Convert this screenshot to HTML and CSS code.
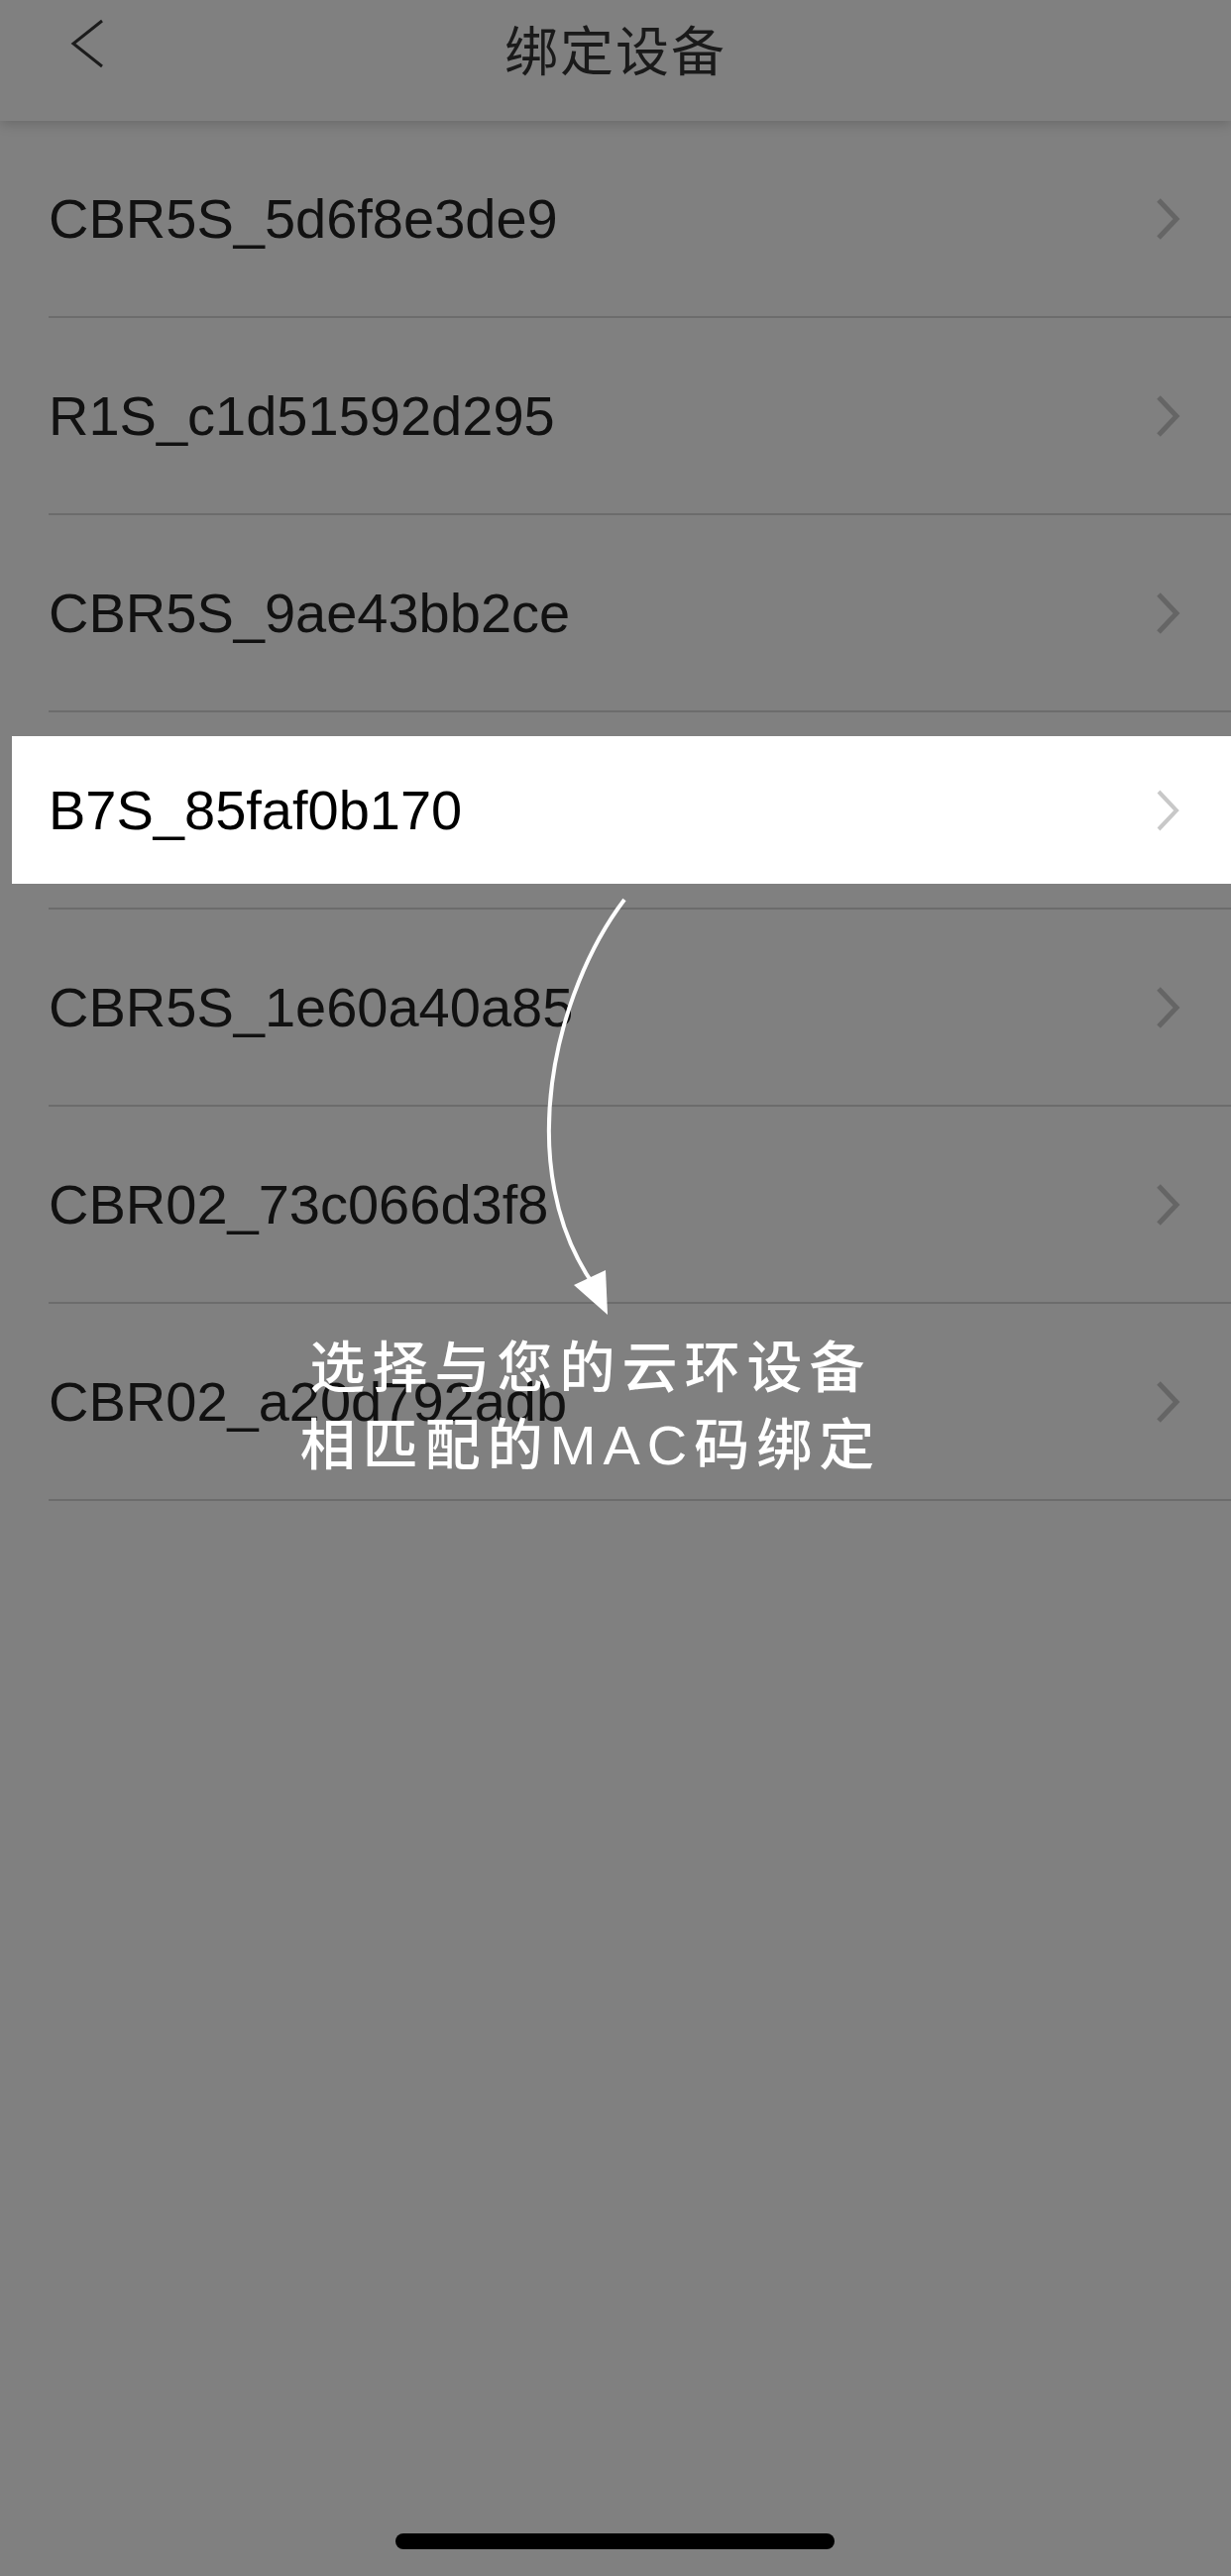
FILE: index.html
```html
<!DOCTYPE html>
<html lang="zh-CN">
<head>
<meta charset="utf-8">
<title>绑定设备</title>
<link rel="stylesheet" href="styles.css">
</head>
<body>
<div class="screen">
  <header class="navbar">
    <svg class="back" width="40" height="52" viewBox="0 0 40 52"><path d="M35 3 L6 26 L35 49" fill="none" stroke="#1c1c1c" stroke-width="3"/></svg>
    <h1 class="title">绑定设备</h1>
  </header>
  <ul class="list">
    <li class="row"><span class="name">CBR5S_5d6f8e3de9</span><svg class="chev" width="27" height="44" viewBox="0 0 27 44"><path d="M4 3 L22 22 L4 41" fill="none" stroke-width="5"/></svg></li>
    <li class="row"><span class="name">R1S_c1d51592d295</span><svg class="chev" width="27" height="44" viewBox="0 0 27 44"><path d="M4 3 L22 22 L4 41" fill="none" stroke-width="5"/></svg></li>
    <li class="row"><span class="name">CBR5S_9ae43bb2ce</span><svg class="chev" width="27" height="44" viewBox="0 0 27 44"><path d="M4 3 L22 22 L4 41" fill="none" stroke-width="5"/></svg></li>
    <li class="row row-hl"><div class="hl"><span class="name">B7S_85faf0b170</span><svg class="chev" width="27" height="44" viewBox="0 0 27 44"><path d="M4 3 L22 22 L4 41" fill="none" stroke-width="4"/></svg></div></li>
    <li class="row"><span class="name">CBR5S_1e60a40a85</span><svg class="chev" width="27" height="44" viewBox="0 0 27 44"><path d="M4 3 L22 22 L4 41" fill="none" stroke-width="5"/></svg></li>
    <li class="row"><span class="name">CBR02_73c066d3f8</span><svg class="chev" width="27" height="44" viewBox="0 0 27 44"><path d="M4 3 L22 22 L4 41" fill="none" stroke-width="5"/></svg></li>
    <li class="row"><span class="name">CBR02_a20d792adb</span><svg class="chev" width="27" height="44" viewBox="0 0 27 44"><path d="M4 3 L22 22 L4 41" fill="none" stroke-width="5"/></svg></li>
  </ul>

  <svg class="guide-arrow" width="1242" height="2600" viewBox="0 0 1242 2600">
    <path d="M630 908 C560 1000 515 1180 601 1300" fill="none" stroke="#fff" stroke-width="4"/>
    <polygon points="579,1297 611,1282 613,1327" fill="#fff"/>
  </svg>
  <div class="hint">
    <p>选择与您的云环设备</p>
    <p>相匹配的MAC码绑定</p>
  </div>

  <div class="home-indicator"></div>
</div>
</body>
</html>
```

FILE: styles.css
```css
* { box-sizing: border-box; }
html, body {
  margin: 0;
  padding: 0;
  background: #808080;
}
.screen {
  position: relative;
  width: 1242px;
  height: 2600px;
  overflow: hidden;
  background: #808080;
  font-family: "Liberation Sans", "Noto Sans CJK SC", sans-serif;
}
.navbar {
  position: relative;
  height: 122px;
  display: flex;
  align-items: center;
  justify-content: center;
  background: #808080;
  box-shadow: 0 3px 12px rgba(0,0,0,0.18);
  z-index: 1;
}
.back {
  position: absolute;
  left: 68px;
  top: 18px;
}
.title {
  margin: 0 0 26px 0;
  font-family: "Noto Sans CJK SC", sans-serif;
  font-weight: 400;
  font-size: 54px;
  letter-spacing: 2px;
  color: #1a1a1a;
}
.list {
  list-style: none;
  margin: 0;
  padding: 0;
}
.row {
  margin-left: 49px;
  height: 199px;
  border-bottom: 2px solid #6c6c6c;
  display: flex;
  align-items: center;
  justify-content: space-between;
  padding-right: 50px;
}
.name {
  font-size: 56px;
  color: #111;
}
.chev path { stroke: #656565; }
.row-hl {
  padding-right: 0;
}
.hl {
  margin-left: -37px;
  width: calc(100% + 37px);
  height: 149px;
  background: #fff;
  display: flex;
  align-items: center;
  justify-content: space-between;
  padding-left: 37px;
  padding-right: 50px;
}
.hl .name { color: #000; }
.hl .chev path { stroke: #c8c8c8; }
.guide-arrow {
  position: absolute;
  left: 0;
  top: 0;
  pointer-events: none;
}
.hint {
  position: absolute;
  left: 0;
  width: 1192px;
  top: 1342px;
  text-align: center;
  color: #fff;
  font-family: "Liberation Sans", "Noto Sans CJK SC", sans-serif;
  font-weight: 500;
  font-size: 56px;
  letter-spacing: 7px;
  line-height: 78px;
}
.hint p { margin: 0; }
.home-indicator {
  position: absolute;
  left: 399px;
  top: 2557px;
  width: 443px;
  height: 16px;
  border-radius: 8px;
  background: #000;
}
```
